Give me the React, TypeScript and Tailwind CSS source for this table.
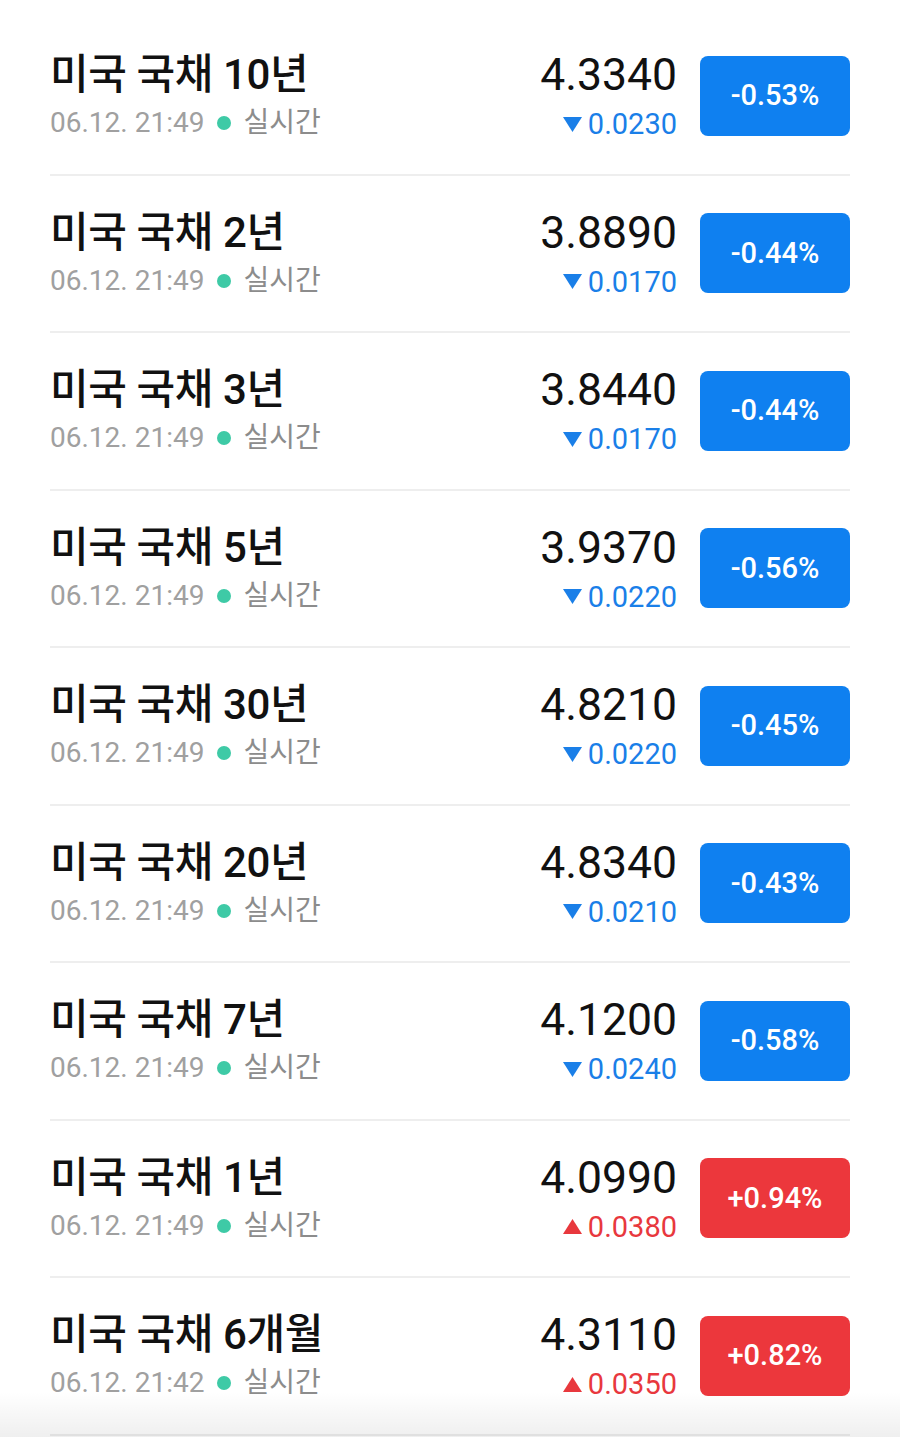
import React from "react";

type Row = { name: string; time: string; price: string; change: string; pct: string; up: boolean };

const rows: Row[] = [
  { name: "미국 국채 10년", time: "06.12. 21:49", price: "4.3340", change: "0.0230", pct: "-0.53%", up: false },
  { name: "미국 국채 2년", time: "06.12. 21:49", price: "3.8890", change: "0.0170", pct: "-0.44%", up: false },
  { name: "미국 국채 3년", time: "06.12. 21:49", price: "3.8440", change: "0.0170", pct: "-0.44%", up: false },
  { name: "미국 국채 5년", time: "06.12. 21:49", price: "3.9370", change: "0.0220", pct: "-0.56%", up: false },
  { name: "미국 국채 30년", time: "06.12. 21:49", price: "4.8210", change: "0.0220", pct: "-0.45%", up: false },
  { name: "미국 국채 20년", time: "06.12. 21:49", price: "4.8340", change: "0.0210", pct: "-0.43%", up: false },
  { name: "미국 국채 7년", time: "06.12. 21:49", price: "4.1200", change: "0.0240", pct: "-0.58%", up: false },
  { name: "미국 국채 1년", time: "06.12. 21:49", price: "4.0990", change: "0.0380", pct: "+0.94%", up: true },
  { name: "미국 국채 6개월", time: "06.12. 21:42", price: "4.3110", change: "0.0350", pct: "+0.82%", up: true },
];

function Triangle({ up }: { up: boolean }) {
  return (
    <svg width="19" height="15" viewBox="0 0 19 15" className="mr-[6px]">
      {up ? (
        <polygon points="9.5,0 19,15 0,15" fill="#e8383d" />
      ) : (
        <polygon points="0,0 19,0 9.5,15" fill="#1a7fe8" />
      )}
    </svg>
  );
}

export default function App() {
  return (
    <div
      className="relative w-[900px] h-[1437px] overflow-hidden bg-white"
      style={{ fontFamily: "Roboto, 'Noto Sans CJK KR', sans-serif" }}
    >
      <div className="px-[50px] pt-[18px]">
        {rows.map((r, i) => (
          <div key={i} className="flex items-center h-[157.5px] border-b-2 border-[#eeeeee]">
            <div className="flex-1 flex flex-col">
              <div className="text-[42px] leading-[48px] font-medium text-[#111] tracking-[-0.4px]">{r.name}</div>
              <div className="flex items-center mt-[7px] text-[28px] leading-[34px]">
                <span className="text-[#a0a0a0]">{r.time}</span>
                <span className="w-[14px] h-[14px] rounded-full bg-[#3ecaa6] ml-[13px] mr-[12px]" />
                <span className="text-[#8c8c8c]">실시간</span>
              </div>
            </div>
            <div className="flex flex-col items-end">
              <div className="text-[44.5px] leading-[50px] text-[#111]">{r.price}</div>
              <div className={`flex items-center mt-[7px] text-[29px] leading-[34px] ${r.up ? "text-[#e8383d]" : "text-[#1a7fe8]"}`}>
                <Triangle up={r.up} />
                <span>{r.change}</span>
              </div>
            </div>
            <div
              className={`ml-[23px] w-[150px] h-[80px] rounded-[8px] flex items-center justify-center text-white text-[29px] font-medium ${r.up ? "bg-[#ec373c]" : "bg-[#0f80f0]"}`}
            >
              {r.pct}
            </div>
          </div>
        ))}
      </div>
      <div className="pointer-events-none absolute left-0 right-0 bottom-0 h-[45px] bg-gradient-to-b from-transparent to-[#00000010]" />
    </div>
  );
}
